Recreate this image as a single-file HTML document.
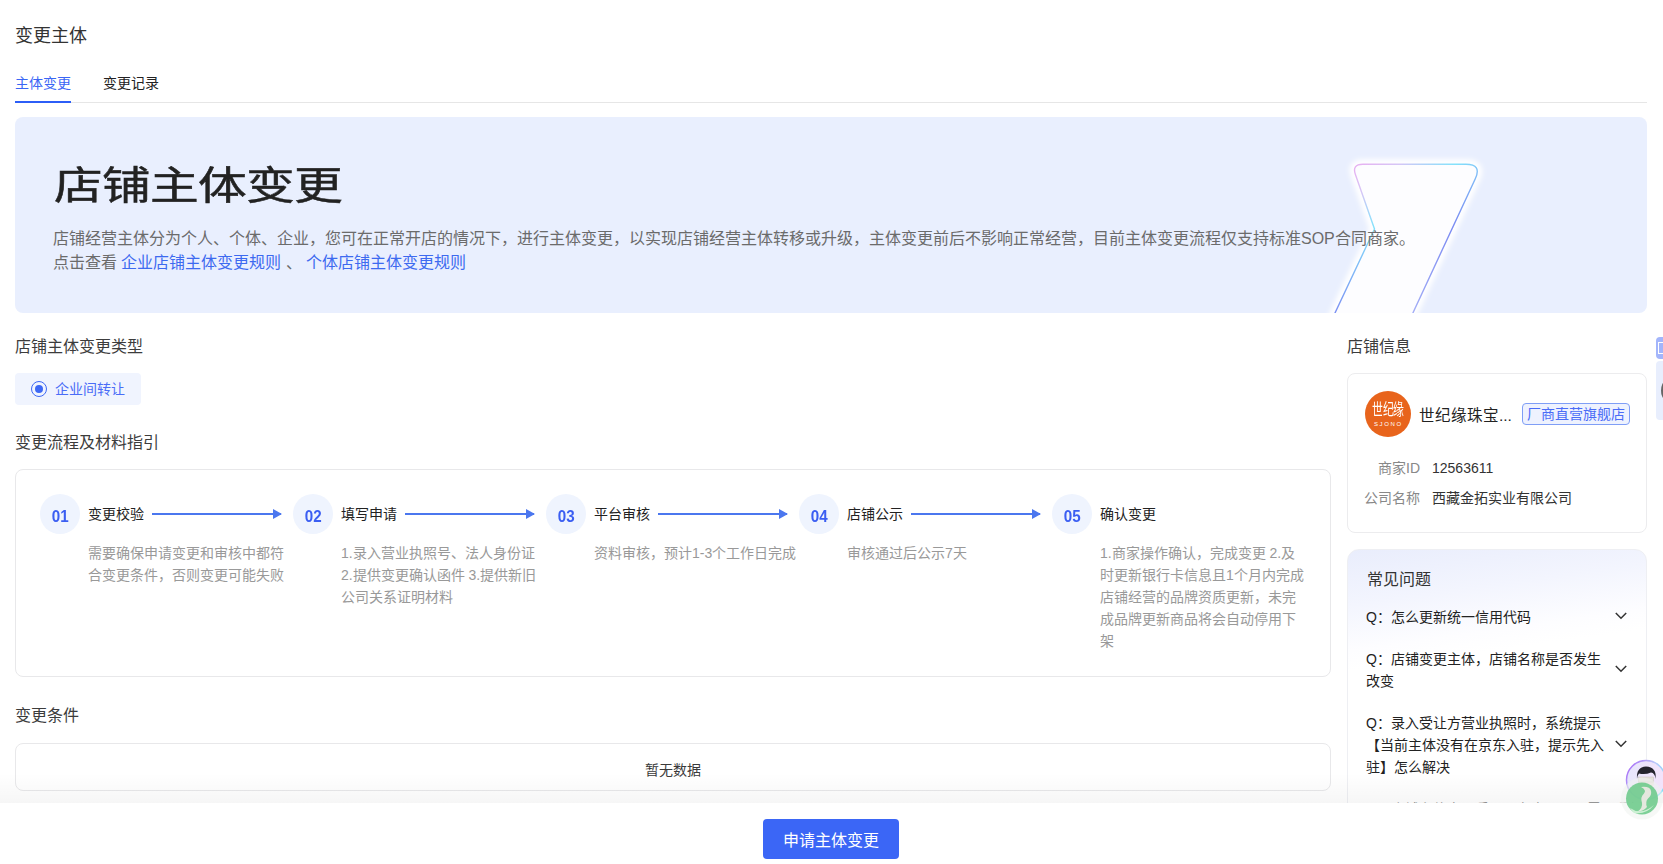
<!DOCTYPE html>
<html lang="zh-CN"><head><meta charset="utf-8">
<style>
*{box-sizing:border-box;margin:0;padding:0}
html,body{width:1663px;height:864px;overflow:hidden;background:#fff}
body{font-family:"Liberation Sans",sans-serif;color:#222;position:relative}
.abs{position:absolute;white-space:nowrap}
#title{left:15px;top:26px;color:#333;font-size:18px;line-height:20px}
#tab1{left:15px;top:75px;color:#3a66f5;font-size:14px;line-height:16px}
#tab2{left:103px;top:75px;color:#222;font-size:14px;line-height:16px}
#tabline{left:15px;top:102px;width:1632px;height:1px;background:#e6e6e6}
#tabul{left:15px;top:101px;width:56px;height:2px;background:#2c5ef7}
#banner{left:15px;top:117px;width:1632px;height:196px;background:#e9effe;border-radius:8px;overflow:hidden}
#deco{position:absolute;left:1290px;top:30px}
#btitle{left:39px;top:44px;font-size:39px;line-height:50px;font-weight:500;color:#222;letter-spacing:-0.6px;-webkit-text-stroke:0.5px #222;transform:scaleX(1.25);transform-origin:0 0}
#bdesc{left:38px;top:110px;color:#6b6b6b;font-size:16px;line-height:24px}
#bdesc a{color:#3d6af0;text-decoration:none}
.sec{color:#3c3c3c;font-size:16px;line-height:18px}
#chip{left:15px;top:373px;width:126px;height:32px;background:#f0f4fe;border-radius:4px}
#radio{left:31px;top:381px;width:16px;height:16px;border:1.5px solid #3d68f5;border-radius:50%}
#radio:after{content:"";position:absolute;left:2.5px;top:2.5px;width:8px;height:8px;border-radius:50%;background:#3d68f5}
#chiptext{left:55px;top:381px;font-size:14px;line-height:16px;color:#4a6cf7}
#flow{left:15px;top:469px;width:1316px;height:208px;border:1px solid #e8e8ea;border-radius:8px}
.circ{position:absolute;width:40px;height:40px;border-radius:50%;background:#eff4fe;color:#3b5ef2;font-weight:bold;font-size:16.5px;line-height:45px;text-align:center}
.circ span{display:inline-block;transform:scaleX(0.92)}
.stitle{position:absolute;font-size:14px;line-height:16px;color:#222;font-weight:500;white-space:nowrap}
.arrow{position:absolute;height:2px;background:#4b77ef}
.arrow:after{content:"";position:absolute;right:-1px;top:-4px;border-left:9px solid #4b77ef;border-top:5px solid transparent;border-bottom:5px solid transparent}
.sdesc{position:absolute;font-size:14px;line-height:22px;color:#999;white-space:nowrap}
#cond{left:15px;top:743px;width:1316px;height:48px;border:1px solid #e8e8ea;border-radius:8px}
#nodata{left:645px;top:762px;font-size:14px;line-height:16px;color:#3a3a3a}
#shade{left:0;top:773px;width:1663px;height:30px;background:linear-gradient(180deg,rgba(0,0,0,0) 0%,rgba(0,0,0,0.035) 100%)}
#bottombar{left:0;top:803px;width:1663px;height:61px;background:#fff}
#btn{left:763px;top:819px;width:136px;height:40px;background:#3b66f6;border-radius:4px;color:#fff;font-size:16px;line-height:44px;text-align:center;font-weight:500}
#shop{left:1347px;top:373px;width:300px;height:160px;border:1px solid #ececee;border-radius:8px}
#logo{left:1365px;top:391px;width:46px;height:46px;border-radius:50%;background:#e8641c;color:#fff;text-align:center}
#logocn{left:-1px;top:10px;width:48px;font-size:16px;line-height:17px;color:#fff;transform:scaleX(0.68);transform-origin:24px 0;text-align:center}
#logoen{left:9px;top:29px;font-size:6px;line-height:8px;letter-spacing:1.6px;color:#fff}
#shopname{left:1419px;top:406.5px;font-size:15.5px;line-height:18px;color:#222}
#tag{left:1522px;top:403px;width:108px;height:22px;border:1px solid #7f9ef6;background:#eef2fe;border-radius:4px;color:#4a6cf7;font-size:14px;line-height:20px;text-align:center}
.lbl{position:absolute;font-size:14px;line-height:16px;color:#888;text-align:right;width:80px}
.val{position:absolute;font-size:14px;line-height:16px;color:#333;white-space:nowrap}
#faq{left:1347px;top:549px;width:300px;height:320px;border:1px solid #eeeff3;border-radius:12px;background:linear-gradient(172deg,#e9edfc 0px,#f3f5fe 55px,#fdfdff 100px,#fff 120px)}
#faqt{left:1367px;top:571px;font-size:16px;line-height:18px;color:#333}
.q{position:absolute;left:1366px;font-size:14px;line-height:22px;color:#222;font-weight:500;white-space:nowrap}
.chev{position:absolute;left:1615px;width:12px;height:8px}
</style></head><body>
<div class="abs" id="title">变更主体</div>
<div class="abs" id="tab1">主体变更</div>
<div class="abs" id="tab2">变更记录</div>
<div class="abs" id="tabline"></div>
<div class="abs" id="tabul"></div>

<div class="abs" id="banner">
  <svg id="deco" width="220" height="180" viewBox="0 0 220 180">
    <defs>
      <linearGradient id="gs" x1="0" y1="0" x2="0.7" y2="1">
        <stop offset="0" stop-color="#f2a2ee"/>
        <stop offset="0.22" stop-color="#d6c6f6"/>
        <stop offset="0.4" stop-color="#84e2fb"/>
        <stop offset="0.65" stop-color="#7a8af2"/>
        <stop offset="1" stop-color="#b9c0f8"/>
      </linearGradient>
      <filter id="glow" x="-30%" y="-30%" width="160%" height="160%"><feGaussianBlur stdDeviation="2.8"/></filter>
      <filter id="soft" x="-10%" y="-10%" width="120%" height="120%"><feGaussianBlur stdDeviation="0.35"/></filter>
    </defs>
    <path d="M50.4 27.6 Q46.8 17.2 57.8 17.2 L161 17.2 Q177 17.2 170.3 31.7 L101.4 180 L23.4 180 L69.5 82 Z" fill="none" stroke="#fff" stroke-width="10" opacity="1" filter="url(#glow)"/>
    <path d="M50.4 27.6 Q46.8 17.2 57.8 17.2 L161 17.2 Q177 17.2 170.3 31.7 L101.4 180 L23.4 180 L69.5 82 Z" fill="#fdfdff" stroke="url(#gs)" stroke-width="1.4" filter="url(#soft)"/>
  </svg>
  <div class="abs" id="btitle">店铺主体变更</div>
  <div class="abs" id="bdesc">店铺经营主体分为个人、个体、企业，您可在正常开店的情况下，进行主体变更，以实现店铺经营主体转移或升级，主体变更前后不影响正常经营，目前主体变更流程仅支持标准SOP合同商家。<br>点击查看 <a>企业店铺主体变更规则</a> 、 <a>个体店铺主体变更规则</a></div>
</div>

<div class="abs sec" style="left:15px;top:338px">店铺主体变更类型</div>
<div class="abs" id="chip"></div>
<div class="abs" id="radio"></div>
<div class="abs" id="chiptext">企业间转让</div>
<div class="abs sec" style="left:15px;top:434px">变更流程及材料指引</div>
<div class="abs" id="flow"></div>

<div class="circ" style="left:40px;top:494px"><span>01</span></div>
<div class="stitle" style="left:88px;top:506px">变更校验</div>
<div class="arrow" style="left:152px;top:513px;width:129px"></div>
<div class="sdesc" style="left:88px;top:542px">需要确保申请变更和审核中都符<br>合变更条件，否则变更可能失败</div>

<div class="circ" style="left:293px;top:494px"><span>02</span></div>
<div class="stitle" style="left:341px;top:506px">填写申请</div>
<div class="arrow" style="left:405px;top:513px;width:129px"></div>
<div class="sdesc" style="left:341px;top:542px">1.录入营业执照号、法人身份证<br>2.提供变更确认函件 3.提供新旧<br>公司关系证明材料</div>

<div class="circ" style="left:546px;top:494px"><span>03</span></div>
<div class="stitle" style="left:594px;top:506px">平台审核</div>
<div class="arrow" style="left:658px;top:513px;width:129px"></div>
<div class="sdesc" style="left:594px;top:542px">资料审核，预计1-3个工作日完成</div>

<div class="circ" style="left:799px;top:494px"><span>04</span></div>
<div class="stitle" style="left:847px;top:506px">店铺公示</div>
<div class="arrow" style="left:911px;top:513px;width:129px"></div>
<div class="sdesc" style="left:847px;top:542px">审核通过后公示7天</div>

<div class="circ" style="left:1052px;top:494px"><span>05</span></div>
<div class="stitle" style="left:1100px;top:506px">确认变更</div>
<div class="sdesc" style="left:1100px;top:542px">1.商家操作确认，完成变更 2.及<br>时更新银行卡信息且1个月内完成<br>店铺经营的品牌资质更新，未完<br>成品牌更新商品将会自动停用下<br>架</div>

<div class="abs sec" style="left:15px;top:707px">变更条件</div>
<div class="abs" id="cond"></div>
<div class="abs" id="nodata">暂无数据</div>

<div class="abs sec" style="left:1347px;top:338px">店铺信息</div>
<div class="abs" id="shop"></div>
<div class="abs" id="logo"><div class="abs" id="logocn">世纪缘</div><div class="abs" id="logoen">SJONO</div></div>
<div class="abs" id="shopname">世纪缘珠宝...</div>
<div class="abs" id="tag">厂商直营旗舰店</div>
<div class="lbl" style="left:1340px;top:460px">商家ID</div>
<div class="val" style="left:1432px;top:460px">12563611</div>
<div class="lbl" style="left:1340px;top:490px">公司名称</div>
<div class="val" style="left:1432px;top:490px">西藏金拓实业有限公司</div>

<div class="abs" id="faq"></div>
<div class="abs" id="faqt">常见问题</div>
<div class="q" style="top:606px">Q：怎么更新统一信用代码</div>
<div class="q" style="top:648px">Q：店铺变更主体，店铺名称是否发生<br>改变</div>
<div class="q" style="top:712px">Q：录入受让方营业执照时，系统提示<br>【当前主体没有在京东入驻，提示先入<br>驻】怎么解决</div>

<svg class="chev" style="top:612px" width="12" height="8" viewBox="0 0 12 8"><polyline points="0.8,1 6,6.3 11.2,1" fill="none" stroke="#333" stroke-width="1.5"/></svg>
<svg class="chev" style="top:665px" width="12" height="8" viewBox="0 0 12 8"><polyline points="0.8,1 6,6.3 11.2,1" fill="none" stroke="#333" stroke-width="1.5"/></svg>
<svg class="chev" style="top:740px" width="12" height="8" viewBox="0 0 12 8"><polyline points="0.8,1 6,6.3 11.2,1" fill="none" stroke="#333" stroke-width="1.5"/></svg>
<div class="q" style="top:798px;color:#888">Q：店铺主体变更后，原有商品是否需要重新</div>
<div class="abs" id="shade"></div>
<div class="abs" id="bottombar"></div>
<div class="abs" id="btn">申请主体变更</div>
<div class="abs" style="left:1656px;top:337px;width:14px;height:22px;border-radius:4px;background:#a3b5fb"></div>
<div class="abs" style="left:1658px;top:342px;width:5px;height:12px;border:1.5px solid #fff;border-right:none"></div>
<div class="abs" style="left:1656px;top:361px;width:14px;height:59px;border-radius:4px;background:#e8eefd"></div>
<div class="abs" style="left:1661px;top:382px;width:8px;height:17px;border-radius:50%;background:#666"></div>
<svg class="abs" style="left:1615px;top:750px" width="48" height="75" viewBox="0 0 48 75">
  <defs>
    <linearGradient id="ring" x1="0" y1="0" x2="1" y2="0.6">
      <stop offset="0" stop-color="#a65cf6"/><stop offset="0.55" stop-color="#b9c6fa"/><stop offset="1" stop-color="#7fe0fb"/>
    </linearGradient>
    <linearGradient id="rfill" x1="0" y1="0" x2="1" y2="0">
      <stop offset="0" stop-color="#e6e6fc"/><stop offset="1" stop-color="#f3e3fb"/>
    </linearGradient>
  </defs>
  <circle cx="31" cy="30" r="19.5" fill="url(#rfill)" stroke="url(#ring)" stroke-width="1.5"/>
  <path d="M23 31 Q23 40 31 42 Q39 40 39 31 Z" fill="#eadfda"/>
  <rect x="23.5" y="27" width="15" height="5" fill="#e4e0dc" stroke="#cfc8c4" stroke-width="0.6"/>
  <path d="M22 29 Q21 17 31 16.5 Q42 17 40.5 29 Q40 23 36 22.5 Q30 25 24 23.5 Q22.5 25 22 29 Z" fill="#24242e"/>
  <circle cx="27" cy="48.5" r="21" fill="#eef3ef" opacity="0.55"/>
  <circle cx="27" cy="48.5" r="16" fill="#6cc98a" opacity="0.88"/>
  <path d="M26 37 Q35 36 36 41 Q37 45 33 48.5 Q30 52 32 57 Q29 61 22 62 Q28 58 27 53 Q25 47 29 43.5 Q32 40 26 37 Z" fill="#efeae6" opacity="0.9"/>
  <path d="M15 58 Q26 66 39 55 Q31 65 19 63 Z" fill="#cdf0d4"/>
</svg>

</body></html>
